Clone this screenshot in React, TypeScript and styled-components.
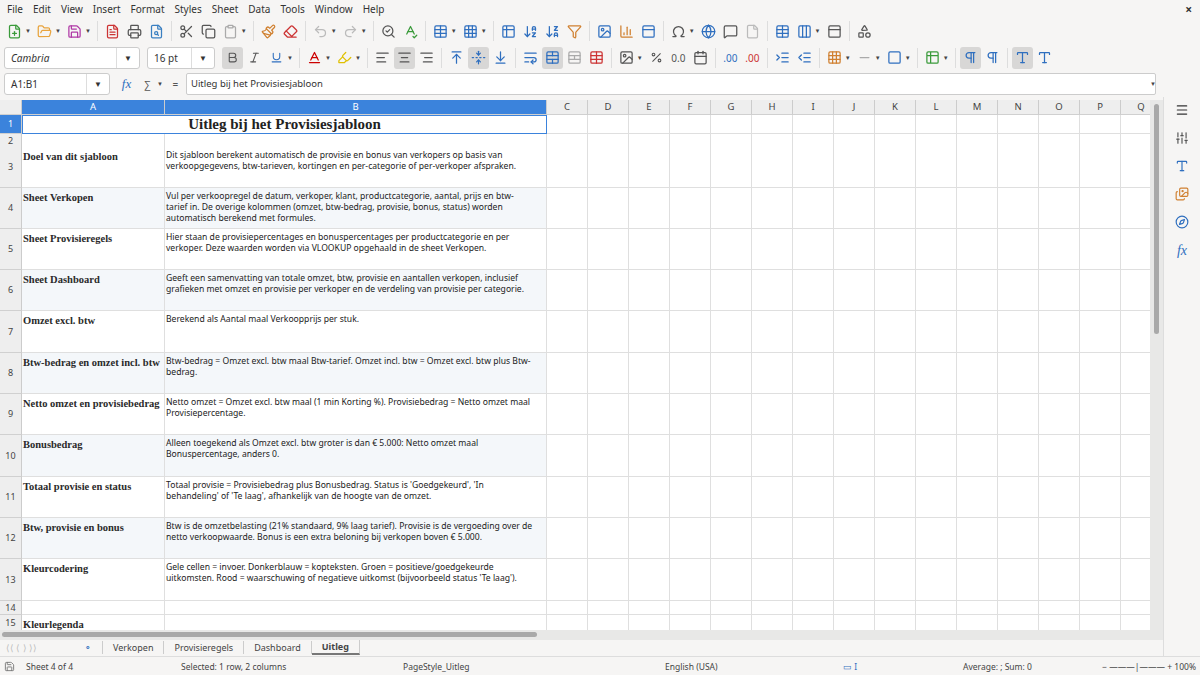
import React from "react";
import styled, { createGlobalStyle } from "styled-components";
import {
  FilePlus, FolderOpen, Save, FileText, Printer, FileSearch, Scissors, Copy, Clipboard, Paintbrush, Eraser,
  Undo2, Redo2, SearchCheck, SpellCheck, Table, Grid3x3, ArrowDownAZ, ArrowDownZA, Filter, Image, BarChart3,
  Omega, Globe, MessageSquare, File, Columns3, PanelTop, Shapes, Bold, Italic, Underline, AlignLeft, AlignCenter,
  AlignRight, ArrowUpToLine, FoldVertical, ArrowDownToLine, WrapText, TableCellsMerge, TableCellsSplit, Percent,
  Calendar, IndentIncrease, IndentDecrease, Square, Minus, Pilcrow, Menu, Sliders, Type, Images, Compass,
  Table2, Baseline, Highlighter
} from "lucide-react";

const G = createGlobalStyle`
  html,body{margin:0;padding:0;background:#f6f5f4;font-family:"Noto Sans","Open Sans",sans-serif;overflow:hidden;}
`;

const Win = styled.div`width:1200px;height:675px;display:flex;flex-direction:column;background:#f6f5f4;color:#333;`;
const MenuBar = styled.div`height:17px;display:flex;align-items:center;font-size:10px;padding-left:2px;position:relative;`;
const MenuItem = styled.span`padding:0 5px;color:#333;`;
const Close = styled.span`position:absolute;right:8px;top:1px;font-size:12px;font-weight:bold;`;
const Bar = styled.div<{ h: number }>`height:${p => p.h}px;display:flex;align-items:center;padding-left:4px;gap:1px;`;
const Btn = styled.div<{ on?: boolean; c?: string }>`width:21px;height:22px;display:flex;align-items:center;justify-content:center;border-radius:3px;
  font-size:10px;background:${p => (p.on ? "#d8d7d6" : "transparent")};color:${p => p.c || "#555"};`;
const Drop = styled.span`font-size:6px;color:#444;margin:0 2px 0 -1px;`;
const Sep = styled.div`width:1px;height:20px;background:#ddd;margin:0 3px;`;
const Combo = styled.div<{ w: number }>`width:${p => p.w}px;height:22px;background:#fff;border:1px solid #ccc;border-radius:3px;display:flex;align-items:center;
  font-size:10px;margin-right:6px;box-sizing:border-box;`;
const ComboText = styled.span<{ it?: boolean }>`flex:1;padding-left:6px;font-style:${p => (p.it ? "italic" : "normal")};`;
const ComboArrow = styled.span`width:22px;border-left:1px solid #ddd;height:100%;display:flex;align-items:center;justify-content:center;font-size:8px;`;
const FormulaRow = styled.div`height:27px;display:flex;align-items:center;padding-left:4px;padding-right:44px;position:relative;`;
const Input = styled.div`flex:1;height:20px;background:#fff;border:1px solid #ccc;border-radius:2px;font-size:9.5px;display:flex;align-items:center;padding-left:4px;`;
const Main = styled.div`flex:1;display:flex;min-height:0;`;
const SheetArea = styled.div`width:1163px;display:flex;flex-direction:column;`;
const GridWrap = styled.div`display:flex;height:530px;`;
const Grid = styled.div`width:1150px;overflow:hidden;background:#fff;`;
const VScroll = styled.div`width:13px;background:#e8e8e7;display:flex;justify-content:center;padding-top:4px;box-sizing:border-box;`;
const Thumb = styled.div`width:5px;height:230px;background:#a9a9a9;border-radius:3px;`;
const Row = styled.div<{ h: number }>`display:grid;grid-template-columns:22px 143px 382px repeat(15,41px);height:${p => p.h}px;`;
const RH = styled.div<{ sel?: boolean }>`background:${p => (p.sel ? "#3b83dc" : "#eeeeee")};color:${p => (p.sel ? "#fff" : "#444")};font-size:9px;display:flex;align-items:center;justify-content:center;
  border-bottom:1px solid #d0d0d0;border-right:1px solid #ccc;box-sizing:border-box;`;
const CH = styled(RH)`font-size:9.5px;`;
const Cell = styled.div<{ alt?: boolean }>`background:${p => (p.alt ? "#f4f7fa" : "#fff")};border-right:1px solid #dfdfdf;border-bottom:1px solid #dfdfdf;box-sizing:border-box;
  font-size:8.6px;line-height:11px;padding:3px 12px 0 1px;overflow:hidden;color:#222;font-family:"Noto Sans","Open Sans",sans-serif;`;
const Head = styled(Cell)`font-family:"Liberation Serif","DejaVu Serif",serif;font-weight:bold;font-size:10.5px;white-space:nowrap;padding:4px 0 0 1px;color:#2a2a2a;`;
const Title = styled.div`grid-column:2 / 4;border:1.5px solid #3b83dc;display:flex;align-items:center;justify-content:center;font-family:"Liberation Serif",serif;font-weight:bold;font-size:15px;box-sizing:border-box;background:#fff;color:#222;`;
const HScroll = styled.div`height:10px;background:#e8e8e7;display:flex;align-items:center;padding-left:2px;`;
const HThumb = styled.div`width:535px;height:5px;background:#a9a9a9;border-radius:3px;`;
const Tabs = styled.div`height:17px;display:flex;align-items:center;font-size:9px;color:#444;padding-left:6px;`;
const Tab = styled.span<{ on?: boolean }>`padding:0 10px;border-right:1px solid #ccc;height:13px;display:flex;align-items:center;font-weight:${p => (p.on ? "bold" : "normal")};
  border-bottom:${p => (p.on ? "2px solid #777" : "none")};`;
const Status = styled.div`height:18px;display:grid;grid-template-columns:22px 155px 222px 200px 240px 30px 210px 1fr;align-items:center;font-size:8.5px;color:#444;padding-left:4px;border-top:1px solid #ddd;`;
const Side = styled.div`width:37px;display:flex;flex-direction:column;align-items:center;padding-top:6px;gap:14px;border-left:1px solid #ddd;`;

const cols = ["C","D","E","F","G","H","I","J","K","L","M","N","O","P","Q"];
const rows: [number, string, string, number][] = [
  [3, "Doel van dit sjabloon", "Dit sjabloon berekent automatisch de provisie en bonus van verkopers op basis van verkoopgegevens, btw-tarieven, kortingen en per-categorie of per-verkoper afspraken.", 41],
  [4, "Sheet Verkopen", "Vul per verkoopregel de datum, verkoper, klant, productcategorie, aantal, prijs en btw-tarief in. De overige kolommen (omzet, btw-bedrag, provisie, bonus, status) worden automatisch berekend met formules.", 41],
  [5, "Sheet Provisieregels", "Hier staan de provisiepercentages en bonuspercentages per productcategorie en per verkoper. Deze waarden worden via VLOOKUP opgehaald in de sheet Verkopen.", 41],
  [6, "Sheet Dashboard", "Geeft een samenvatting van totale omzet, btw, provisie en aantallen verkopen, inclusief grafieken met omzet en provisie per verkoper en de verdeling van provisie per categorie.", 41],
  [7, "Omzet excl. btw", "Berekend als Aantal maal Verkoopprijs per stuk.", 42],
  [8, "Btw-bedrag en omzet incl. btw", "Btw-bedrag = Omzet excl. btw maal Btw-tarief. Omzet incl. btw = Omzet excl. btw plus Btw-bedrag.", 41],
  [9, "Netto omzet en provisiebedrag", "Netto omzet = Omzet excl. btw maal (1 min Korting %). Provisiebedrag = Netto omzet maal Provisiepercentage.", 41],
  [10, "Bonusbedrag", "Alleen toegekend als Omzet excl. btw groter is dan € 5.000: Netto omzet maal Bonuspercentage, anders 0.", 42],
  [11, "Totaal provisie en status", "Totaal provisie = Provisiebedrag plus Bonusbedrag. Status is 'Goedgekeurd', 'In behandeling' of 'Te laag', afhankelijk van de hoogte van de omzet.", 41],
  [12, "Btw, provisie en bonus", "Btw is de omzetbelasting (21% standaard, 9% laag tarief). Provisie is de vergoeding over de netto verkoopwaarde. Bonus is een extra beloning bij verkopen boven € 5.000.", 41],
  [13, "Kleurcodering", "Gele cellen = invoer. Donkerblauw = kopteksten. Groen = positieve/goedgekeurde uitkomsten. Rood = waarschuwing of negatieve uitkomst (bijvoorbeeld status 'Te laag').", 42],
];

const Empties = () => <>{cols.map(c => <Cell key={c} />)}</>;

const I = 15;
export default function App() {
  return (
    <Win>
      <G />
      <MenuBar>
        {["File","Edit","View","Insert","Format","Styles","Sheet","Data","Tools","Window","Help"].map(m => <MenuItem key={m}>{m}</MenuItem>)}
        <Close>×</Close>
      </MenuBar>
      <Bar h={28}>
        <Btn c="#3a9a3a"><FilePlus size={I} /></Btn><Drop>▼</Drop>
        <Btn c="#e8a33c"><FolderOpen size={I} /></Btn><Drop>▼</Drop>
        <Btn c="#b03aa6"><Save size={I} /></Btn><Drop>▼</Drop><Sep />
        <Btn c="#c33"><FileText size={I} /></Btn><Btn><Printer size={I} /></Btn><Btn c="#3a7fc1"><FileSearch size={I} /></Btn><Sep />
        <Btn><Scissors size={I} /></Btn><Btn><Copy size={I} /></Btn><Btn c="#aaa"><Clipboard size={I} /></Btn><Drop>▼</Drop><Sep />
        <Btn c="#d08030"><Paintbrush size={I} /></Btn><Btn c="#c33"><Eraser size={I} /></Btn><Sep />
        <Btn c="#bbb"><Undo2 size={I} /></Btn><Drop>▼</Drop><Btn c="#bbb"><Redo2 size={I} /></Btn><Drop>▼</Drop><Sep />
        <Btn><SearchCheck size={I} /></Btn><Btn c="#3a9a3a"><SpellCheck size={I} /></Btn><Sep />
        <Btn c="#2f6fbf"><Table size={I} /></Btn><Drop>▼</Drop><Btn c="#2f6fbf"><Grid3x3 size={I} /></Btn><Drop>▼</Drop><Sep />
        <Btn c="#2f6fbf"><Table2 size={I} /></Btn><Btn c="#2f6fbf"><ArrowDownAZ size={I} /></Btn><Btn c="#2f6fbf"><ArrowDownZA size={I} /></Btn><Btn c="#d08030"><Filter size={I} /></Btn><Sep />
        <Btn c="#2f6fbf"><Image size={I} /></Btn><Btn c="#d08030"><BarChart3 size={I} /></Btn><Btn c="#2f6fbf"><PanelTop size={I} /></Btn><Sep />
        <Btn><Omega size={I} /></Btn><Drop>▼</Drop><Btn c="#2f6fbf"><Globe size={I} /></Btn><Btn><MessageSquare size={I} /></Btn><Btn c="#bbb"><File size={I} /></Btn><Sep />
        <Btn c="#2f6fbf"><Table size={I} /></Btn><Btn c="#2f6fbf"><Columns3 size={I} /></Btn><Drop>▼</Drop><Btn><PanelTop size={I} /></Btn><Sep />
        <Btn><Shapes size={I} /></Btn>
      </Bar>
      <Bar h={25}>
        <Combo w={136}><ComboText it>Cambria</ComboText><ComboArrow>▼</ComboArrow></Combo>
        <Combo w={68}><ComboText>16 pt</ComboText><ComboArrow>▼</ComboArrow></Combo>
        <Btn on><Bold size={13} /></Btn><Btn><Italic size={13} /></Btn><Btn c="#2f6fbf"><Underline size={13} /></Btn><Drop>▼</Drop><Sep />
        <Btn c="#c00"><Baseline size={I} /></Btn><Drop>▼</Drop><Btn c="#e0c000"><Highlighter size={I} /></Btn><Drop>▼</Drop><Sep />
        <Btn><AlignLeft size={I} /></Btn><Btn on><AlignCenter size={I} /></Btn><Btn><AlignRight size={I} /></Btn><Sep />
        <Btn c="#2f6fbf"><ArrowUpToLine size={I} /></Btn><Btn on c="#2f6fbf"><FoldVertical size={I} /></Btn><Btn c="#2f6fbf"><ArrowDownToLine size={I} /></Btn><Sep />
        <Btn c="#2f6fbf"><WrapText size={I} /></Btn><Btn on c="#2f6fbf"><TableCellsMerge size={I} /></Btn><Btn c="#aaa"><TableCellsSplit size={I} /></Btn><Btn c="#c33"><Table size={I} /></Btn><Sep />
        <Btn><Image size={I} /></Btn><Drop>▼</Drop><Btn><Percent size={13} /></Btn><Btn>0.0</Btn><Btn><Calendar size={I} /></Btn><Sep />
        <Btn c="#2f6fbf">.00</Btn><Btn c="#c33">.00</Btn><Sep />
        <Btn c="#2f6fbf"><IndentIncrease size={I} /></Btn><Btn c="#2f6fbf"><IndentDecrease size={I} /></Btn><Sep />
        <Btn c="#d08030"><Grid3x3 size={I} /></Btn><Drop>▼</Drop><Btn c="#aaa"><Minus size={I} /></Btn><Drop>▼</Drop><Btn c="#2f6fbf"><Square size={I} /></Btn><Drop>▼</Drop><Sep />
        <Btn c="#3a9a3a"><Table2 size={I} /></Btn><Drop>▼</Drop><Sep />
        <Btn on c="#2f6fbf"><Pilcrow size={I} /></Btn><Btn c="#2f6fbf"><Pilcrow size={I} /></Btn><Sep />
        <Btn on c="#2f6fbf"><Type size={I} /></Btn><Btn c="#2f6fbf"><Type size={I} /></Btn>
      </Bar>
      <FormulaRow>
        <Combo w={106}><ComboText>A1:B1</ComboText><ComboArrow>▼</ComboArrow></Combo>
        <Btn c="#2f6fbf"><i style={{ fontFamily: "serif", fontSize: 13 }}>fx</i></Btn><Btn>∑</Btn><Drop>▼</Drop><Btn>=</Btn>
        <Input>Uitleg bij het Provisiesjabloon</Input>
        <Drop style={{ position: "absolute", right: 42 }}>▼</Drop>
      </FormulaRow>
      <Main>
        <SheetArea>
          <div style={{ height: 3 }} />
          <GridWrap>
            <Grid>
              <Row h={15}>
                <CH />
                <CH sel>A</CH><CH sel>B</CH>
                {cols.map(c => <CH key={c}>{c}</CH>)}
              </Row>
              <Row h={19}>
                <RH sel>1</RH><Title>Uitleg bij het Provisiesjabloon</Title><Empties />
              </Row>
              <Row h={13}><RH>2</RH><Cell /><Cell /><Empties /></Row>
              {rows.map(([n, a, b, h]) => (
                <Row key={n} h={h}>
                  <RH>{n}</RH>
                  <Head alt={n % 2 === 0}>{a}</Head>
                  <Cell alt={n % 2 === 0}>{b}</Cell>
                  <Empties />
                </Row>
              ))}
              <Row h={14}><RH>14</RH><Cell /><Cell /><Empties /></Row>
              <Row h={16}><RH>15</RH><Head>Kleurlegenda</Head><Cell /><Empties /></Row>
              <Row h={10}><RH /><Cell /><Cell /><Empties /></Row>
            </Grid>
            <VScroll><Thumb /></VScroll>
          </GridWrap>
          <HScroll><HThumb /></HScroll>
          <Tabs>
            <span style={{ color: "#bbb", width: 68 }}>⟨⟨ ⟨ ⟩ ⟩⟩</span>
            <Tab style={{ color: "#2f6fbf" }}>⚬</Tab>
            <Tab>Verkopen</Tab><Tab>Provisieregels</Tab><Tab>Dashboard</Tab><Tab on>Uitleg</Tab>
          </Tabs>
        </SheetArea>
        <Side>
          <Menu size={14} color="#333" />
          <Sliders size={14} color="#555" />
          <Type size={14} color="#2f6fbf" />
          <Images size={14} color="#d08030" />
          <Compass size={14} color="#2f6fbf" />
          <i style={{ fontFamily: "serif", color: "#2f6fbf", fontSize: 14 }}>fx</i>
        </Side>
      </Main>
      <Status>
        <Save size={11} color="#777" />
        <span>Sheet 4 of 4</span>
        <span>Selected: 1 row, 2 columns</span>
        <span>PageStyle_Uitleg</span>
        <span style={{ paddingLeft: 62 }}>English (USA)</span>
        <span style={{ color: "#2f6fbf" }}>▭ I</span>
        <span style={{ paddingLeft: 90 }}>Average: ; Sum: 0</span>
        <span style={{ textAlign: "right", paddingRight: 4 }}>−  ———|———  +  100%</span>
      </Status>
    </Win>
  );
}
